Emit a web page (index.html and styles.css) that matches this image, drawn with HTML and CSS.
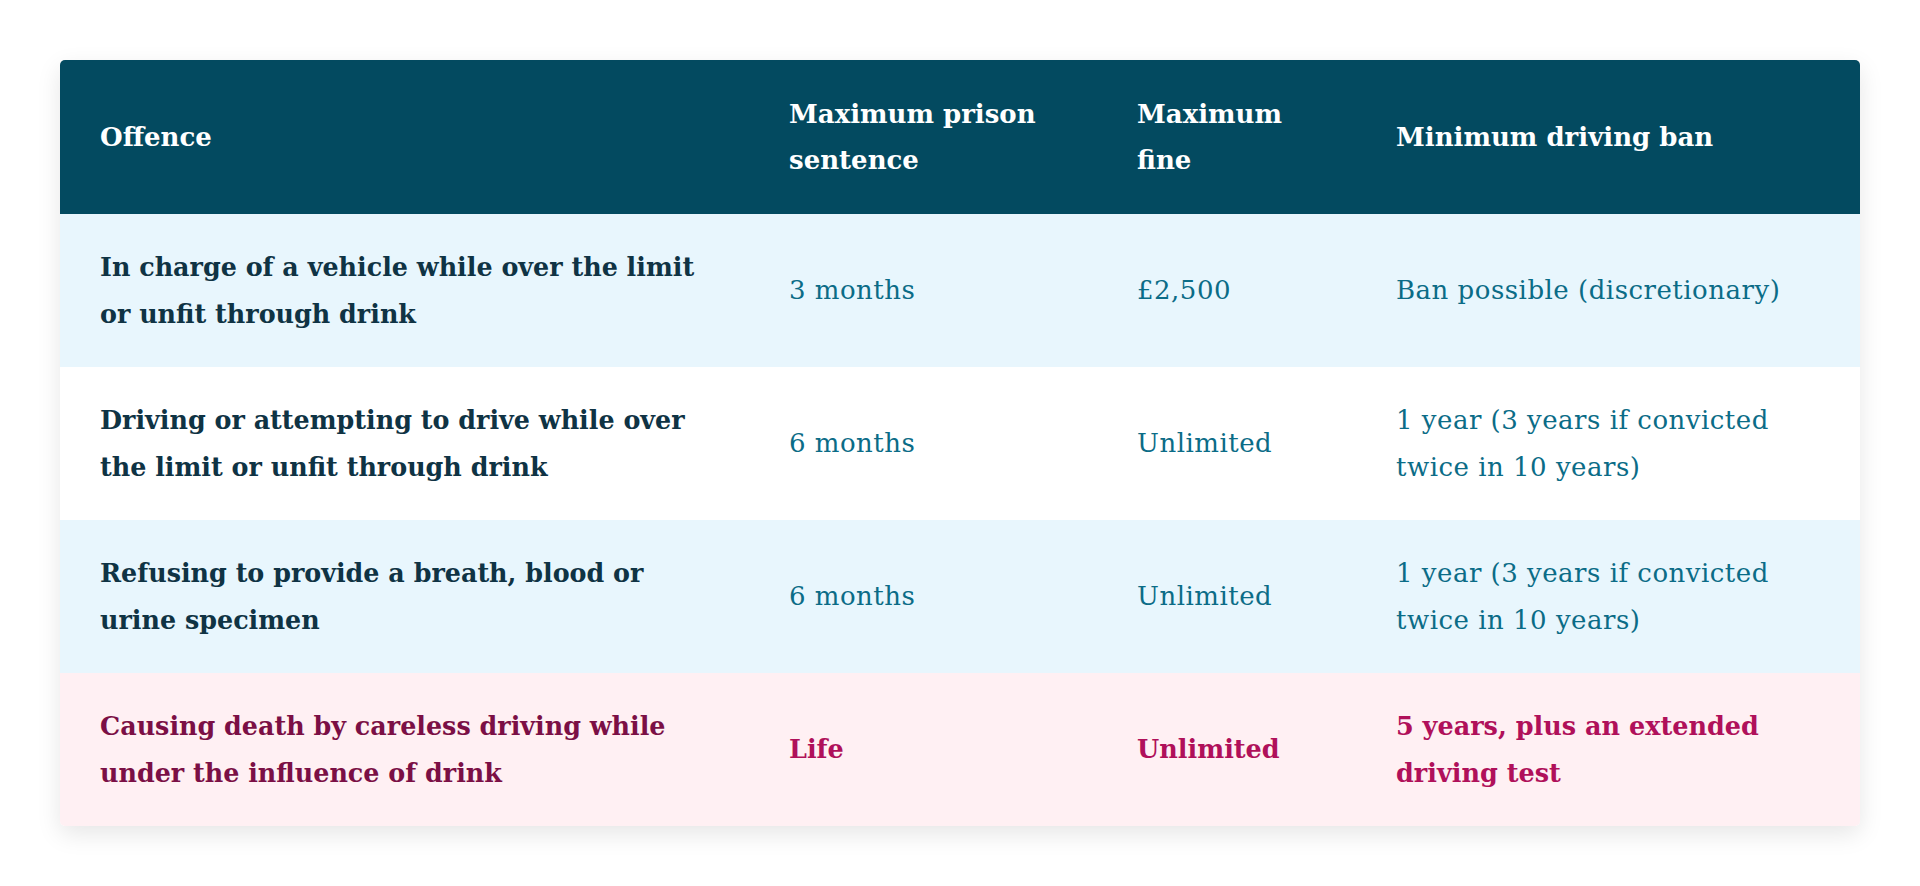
FILE: index.html
```html
<!DOCTYPE html>
<html lang="en">
<head>
<meta charset="utf-8">
<title>Drink driving penalties</title>
<link rel="stylesheet" href="styles.css">
</head>
<body>
<div class="page">
  <table class="penalties">
    <colgroup>
      <col class="c-offence">
      <col class="c-prison">
      <col class="c-fine">
      <col class="c-ban">
    </colgroup>
    <thead>
      <tr>
        <th>Offence</th>
        <th>Maximum prison sentence</th>
        <th>Maximum fine</th>
        <th>Minimum driving ban</th>
      </tr>
    </thead>
    <tbody>
      <tr class="row-blue">
        <td class="offence">In charge of a vehicle while over the limit or unfit through drink</td>
        <td>3 months</td>
        <td>£2,500</td>
        <td>Ban possible (discretionary)</td>
      </tr>
      <tr class="row-white">
        <td class="offence">Driving or attempting to drive while over the limit or unfit through drink</td>
        <td>6 months</td>
        <td>Unlimited</td>
        <td>1 year (3 years if convicted twice in 10 years)</td>
      </tr>
      <tr class="row-blue">
        <td class="offence">Refusing to provide a breath, blood or urine specimen</td>
        <td>6 months</td>
        <td>Unlimited</td>
        <td>1 year (3 years if convicted twice in 10 years)</td>
      </tr>
      <tr class="row-pink">
        <td class="offence">Causing death by careless driving while under the influence of drink</td>
        <td>Life</td>
        <td>Unlimited</td>
        <td>5 years, plus an extended driving test</td>
      </tr>
    </tbody>
  </table>
</div>
</body>
</html>
```

FILE: styles.css
```css
* { box-sizing: border-box; }
html, body {
  margin: 0;
  padding: 0;
  background: #ffffff;
}
.page {
  padding: 60px;
}
.penalties {
  width: 1800px;
  border-collapse: separate;
  border-spacing: 0;
  table-layout: fixed;
  font-family: "DejaVu Serif", "Liberation Serif", serif;
  font-size: 26px;
  line-height: 46.5px;
  border-radius: 5px;
  overflow: hidden;
  box-shadow: 0 8px 24px rgba(0, 0, 0, 0.10);
}
.c-offence { width: 689px; }
.c-prison { width: 348px; }
.c-fine { width: 259px; }
.c-ban { width: 504px; }

.penalties th,
.penalties td {
  padding: 30px 40px;
  text-align: left;
  vertical-align: middle;
}
.penalties th {
  background: #034a60;
  color: #ffffff;
  font-weight: 700;
  font-size: 26px;
  padding-top: 30.5px;
  padding-bottom: 30.5px;
}
.penalties td {
  color: #0b6c87;
  font-weight: 400;
  letter-spacing: 0.5px;
}
.penalties td.offence {
  color: #0f3344;
  font-weight: 700;
  font-size: 25.4px;
  letter-spacing: 0;
}
.row-blue td { background: #e8f6fd; }
.row-white td { background: #ffffff; }
.row-pink td {
  background: #fff0f3;
  color: #b0105a;
  font-weight: 700;
  font-size: 25.5px;
  letter-spacing: 0;
}
.row-pink td.offence { color: #7b0f45; }
```
